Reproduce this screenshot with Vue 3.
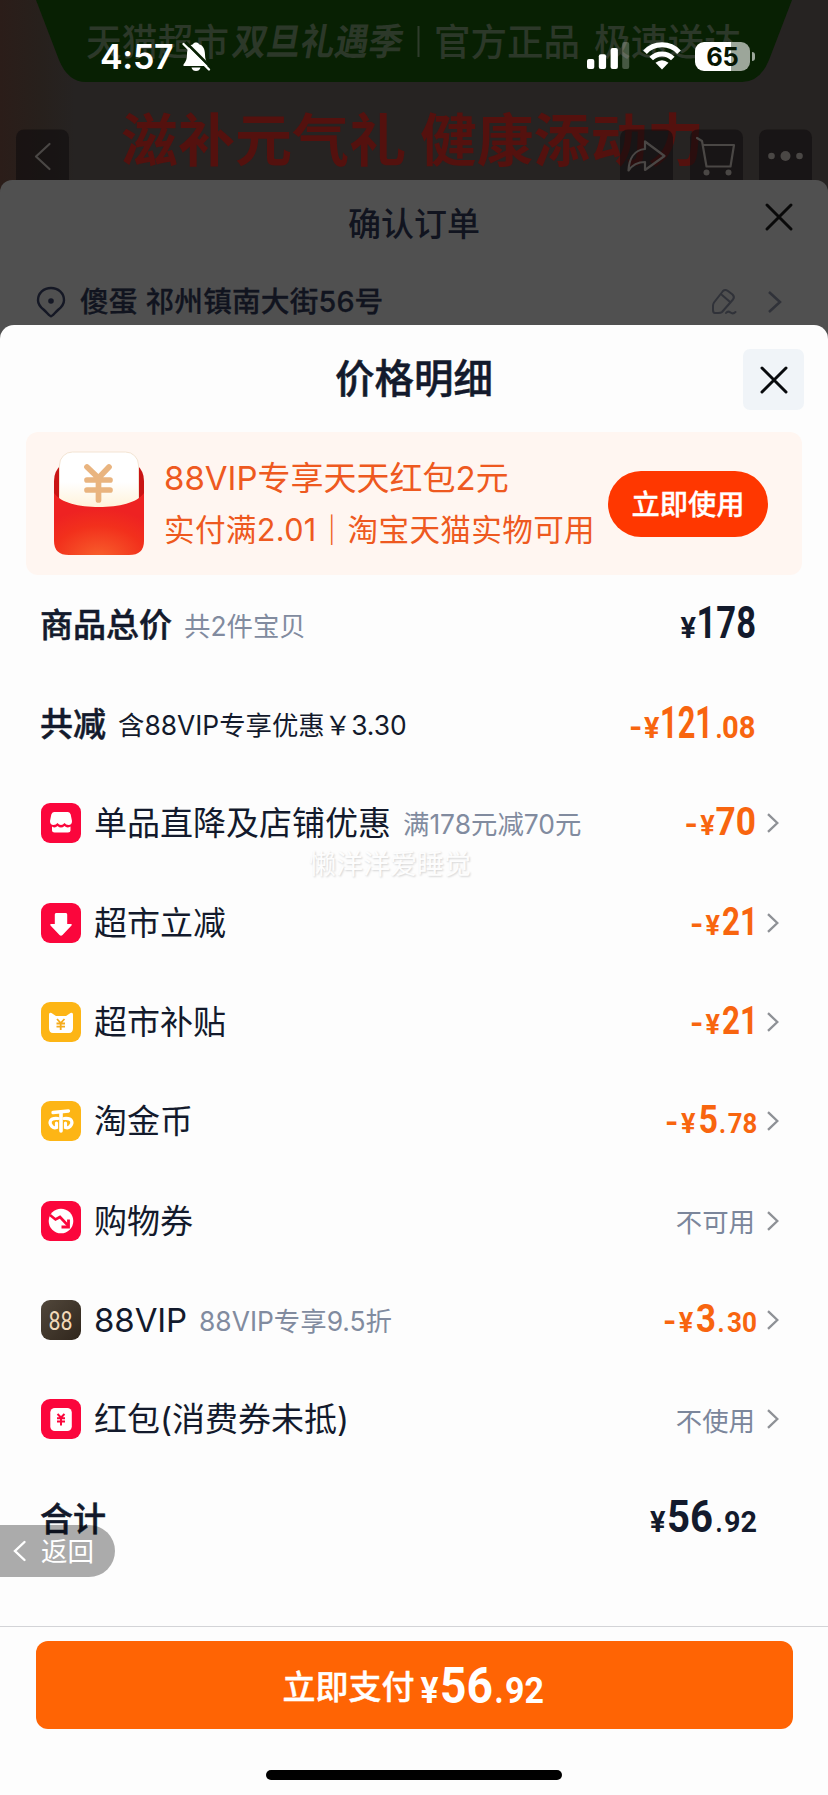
<script setup>
// Glyph runs of an amount: t text, x left edge, w advance width, s font size
const rows = [
  { label: '商品总价', sub: '共2件宝贝', bold: true, dark: true, dy: 43,
    runs: [{ t: '¥', x: 80.5, w: 15.5, s: 30 }, { t: '178', x: 96.5, w: 59.5, s: 43.5 }] },
  { label: '共减', sub: '含88VIP专享优惠￥3.30', subDark: true, bold: true, dy: 43.7,
    runs: [{ t: '-', x: 29, w: 13.5, s: 32 }, { t: '¥', x: 44, w: 15.5, s: 30 }, { t: '121', x: 60, w: 53, s: 43.5 }, { t: '.', x: 115.5, w: 7, s: 30 }, { t: '08', x: 122, w: 33.5, s: 31 }] },
  { icon: 'shop', label: '单品直降及店铺优惠', sub: '满178元减70元', arrow: true,
    runs: [{ t: '-', x: 84.5, w: 13.5, s: 31 }, { t: '¥', x: 100.3, w: 14.5, s: 27.5 }, { t: '70', x: 115.5, w: 40.5, s: 39.5 }] },
  { icon: 'down', label: '超市立减', arrow: true,
    runs: [{ t: '-', x: 90, w: 13.5, s: 31 }, { t: '¥', x: 105.6, w: 14.5, s: 27.5 }, { t: '21', x: 122, w: 36, s: 39.5 }] },
  { icon: 'cat', label: '超市补贴', arrow: true,
    runs: [{ t: '-', x: 90, w: 13.5, s: 31 }, { t: '¥', x: 105.6, w: 14.5, s: 27.5 }, { t: '21', x: 122, w: 36, s: 39.5 }] },
  { icon: 'coin', label: '淘金币', arrow: true,
    runs: [{ t: '-', x: 65, w: 13.5, s: 31 }, { t: '¥', x: 81, w: 14.5, s: 27.5 }, { t: '5', x: 98.5, w: 19.5, s: 39.5 }, { t: '.', x: 119, w: 7, s: 28 }, { t: '78', x: 127.8, w: 29.5, s: 28 }] },
  { icon: 'coupon', label: '购物券', text: '不可用', arrow: true },
  { icon: 'vip', label: '88VIP', sub: '88VIP专享9.5折', arrow: true,
    runs: [{ t: '-', x: 63, w: 13.5, s: 31 }, { t: '¥', x: 78.8, w: 14.5, s: 27.5 }, { t: '3', x: 96, w: 20, s: 39.5 }, { t: '.', x: 117.5, w: 7, s: 28 }, { t: '30', x: 127, w: 30, s: 28 }] },
  { icon: 'packet', label: '红包(消费券未抵)', text: '不使用', arrow: true },
  { label: '合计', bold: true, dark: true, dy: 43.3,
    runs: [{ t: '¥', x: 50, w: 15.5, s: 30 }, { t: '56', x: 67, w: 46, s: 43.5 }, { t: '.', x: 115.5, w: 7, s: 30 }, { t: '92', x: 124, w: 33, s: 30 }] },
]
const payRuns = [
  { t: '¥', x: 5.5, w: 18, s: 36 }, { t: '56', x: 25, w: 53, s: 49.5 },
  { t: '.', x: 79.5, w: 9, s: 37 }, { t: '92', x: 90, w: 39, s: 36.5 },
]
</script>

<template>
  <main class="screen">
    <header class="hero">
      <svg class="hero-art" width="828" height="180" viewBox="0 0 828 180">
        <path d="M36 0L59 60Q68 82 86 82H742Q760 82 769 60L792 0Z" fill="#082003" />
        <g class="hero-text" fill="#2c3829" font-size="37">
          <text x="86" y="56" font-weight="500" textLength="143" lengthAdjust="spacingAndGlyphs">天猫超市</text>
          <text x="0" y="0" font-weight="700" textLength="170" lengthAdjust="spacingAndGlyphs" transform="translate(231 55) skewX(-10)">双旦礼遇季</text>
          <path d="M418.500 26V57" stroke="#2f3c2c" stroke-width="2" />
          <text x="434" y="56" textLength="146" font-weight="500" lengthAdjust="spacingAndGlyphs">官方正品</text>
          <text x="594" y="56" textLength="147" font-weight="500" lengthAdjust="spacingAndGlyphs">极速送达</text>
        </g>
        <g class="hero-text" fill="#54110e" font-size="57" font-weight="700">
          <text x="121" y="161" textLength="285" lengthAdjust="spacingAndGlyphs">滋补元气礼</text>
          <text x="420" y="161" textLength="284" lengthAdjust="spacingAndGlyphs">健康添动力</text>
        </g>
        <g fill="#100d0e" fill-opacity=".62">
          <rect x="16" y="129.500" width="53" height="58" rx="8" />
          <rect x="620" y="129.500" width="53" height="58" rx="8" />
          <rect x="690" y="129.500" width="53" height="58" rx="8" />
          <rect x="759" y="129.500" width="53" height="58" rx="8" />
        </g>
        <g fill="none" stroke="#4a4745" stroke-width="2.200" stroke-linecap="round" stroke-linejoin="round">
          <path d="M49.500 144L36 156.500L49.500 169" />
          <path d="M645 141.500V149C634 150 629 159 628.500 170.500C633 164 639 162 645 162V170L664.500 156Z" />
          <path d="M697 138L702 141L706.500 166.500H730.500L734 145H703" />
        </g>
        <g fill="#4a4745">
          <circle cx="706.500" cy="172.500" r="3" /><circle cx="728.500" cy="172.500" r="3" />
          <circle cx="771.500" cy="156" r="3.300" /><circle cx="785.500" cy="156" r="5" /><circle cx="799.500" cy="156" r="3.300" />
        </g>
      </svg>
      <div class="status">
        <span class="clock">4:57</span>
        <svg class="bell" width="30" height="32" viewBox="0 0 30 32">
          <path d="M2.500 23.500C5 20.500 6 18 6 13.500C6 7.500 8.500 4 12 3.200C12.500 .8 17.500 .8 18 3.200C21.500 4 24 7.500 24 13.500C24 18 25 20.500 27.500 23.500V25H2.500Z" fill="#fff" />
          <path d="M10.500 26.500H19.500Q18.500 30 15 30Q11.500 30 10.500 26.500Z" fill="#fff" />
          <path d="M4.500 1L30 26.500" stroke="#082003" stroke-width="2.600" />
          <path d="M2.500 3L28 28.500" stroke="#fff" stroke-width="2.400" stroke-linecap="round" />
        </svg>
        <span class="spacer" />
        <svg width="44" height="28" viewBox="0 0 44 28" fill="#fff">
          <rect x="1" y="17" width="7.300" height="10" rx="2" /><rect x="12.800" y="12.300" width="7.300" height="14.700" rx="2" />
          <rect x="24.600" y="6" width="7.300" height="21" rx="2" /><rect x="36.200" y="0" width="7" height="27" rx="2" fill-opacity=".25" />
        </svg>
        <svg class="wifi" width="38" height="28" viewBox="0 0 38 28">
          <g fill="none" stroke="#fff" stroke-width="5"><path d="M2 10.200C11 .3 27 .3 36 10.200" /><path d="M8.200 16.600C14.300 10.300 23.700 10.300 29.800 16.600" /></g>
          <path d="M12.500 20.800Q19 15.500 25.500 20.800L19 27.500Z" fill="#fff" />
        </svg>
        <div class="battery"><span>65</span></div>
        <i class="knob" />
      </div>
    </header>

    <section class="order">
      <div class="order-head">
        <h2>确认订单</h2>
        <svg class="order-close" width="28" height="28" viewBox="0 0 28 28" stroke="#090909" stroke-width="3" stroke-linecap="round"><path d="M2 2L26 26M26 2L2 26" /></svg>
      </div>
      <div class="address">
        <svg width="30" height="32" viewBox="0 0 30 32" fill="none" stroke="#151825" stroke-width="2.400">
          <path d="M15 30.300C13.500 30.300 11.500 27 7.500 23.500C3.800 20.500 2 18 2 14.200C2 7 7.800 2 15 2S28 7 28 14.200C28 18 26.200 20.500 22.500 23.500C18.500 27 16.500 30.300 15 30.300Z" /><circle cx="15" cy="15" r="2.800" fill="#151825" stroke="none" />
        </svg>
        <span class="address-text">傻蛋 祁州镇南大街56号</span>
        <svg class="edit" width="26" height="28" viewBox="0 0 26 28" fill="none" stroke="#303239" stroke-width="2" stroke-linecap="round" stroke-linejoin="round">
          <path d="M3 14.500L12 3Q14 1 17 3L21.500 6.500Q24 9 22 11.500L11 24Q10 25 7 25H4Q2 25 2 22V18Q2 16 3 14.500ZM11 7L18.500 13.500M15 25Q17 22.500 19.500 24.500T24.500 24" />
        </svg>
        <svg class="go" width="14" height="22" viewBox="0 0 14 22" fill="none" stroke="#303239" stroke-width="2.500"><path d="M1 1L12 11L1 21" /></svg>
      </div>
    </section>

    <div class="backdrop">
      <section class="sheet">
        <div class="sheet-head">
          <h1>价格明细</h1>
          <button class="close" aria-label="关闭">
            <svg width="28" height="28" viewBox="0 0 28 28" stroke="#080a0d" stroke-width="3" stroke-linecap="round"><path d="M2 2L26 26M26 2L2 26" /></svg>
          </button>
        </div>

        <div class="promo">
          <svg class="envelope" width="92" height="106" viewBox="0 0 92 106">
            <defs>
              <linearGradient id="paper" x2="0" y2="1"><stop offset=".4" stop-color="#fff" /><stop offset="1" stop-color="#ffe9bd" /></linearGradient>
              <radialGradient id="pocket" cx=".5" cy="1.050" r=".8"><stop stop-color="#f8602c" /><stop offset=".65" stop-color="#f2301c" /><stop offset="1" stop-color="#ee2222" /></radialGradient>
            </defs>
            <path d="M1 30Q1 20 8 14H84Q91 20 91 30V75H1Z" fill="#c91414" />
            <rect x="6.500" y="1" width="79" height="75" rx="13" fill="url(#paper)" stroke="#f3e4d3" />
            <g fill="none" stroke="#e9b47f" stroke-width="5.700" stroke-linecap="round"><path d="M34 16L45.500 27L56 16M34 29H57M34 39H57M45.500 28V49" /></g>
            <path d="M1 42C8 52 26 56 46 56S84 52 91 42V90Q91 104 76 104H16Q1 104 1 90Z" fill="url(#pocket)" />
          </svg>
          <div class="promo-text">
            <p class="promo-title">88VIP专享天天红包2元</p>
            <p class="promo-sub">实付满2.01｜淘宝天猫实物可用</p>
          </div>
          <button class="use">立即使用</button>
        </div>

        <ul class="rows">
          <li v-for="r in rows" :key="r.label" class="row">
            <svg v-if="r.icon" class="badge" width="40" height="40" viewBox="0 0 40 40">
              <defs><linearGradient id="brown" x2="1" y2="1"><stop stop-color="#51473b" /><stop offset="1" stop-color="#30261c" /></linearGradient></defs>
              <rect width="40" height="40" rx="9" :fill="r.icon === 'vip' ? 'url(#brown)' : r.icon === 'cat' || r.icon === 'coin' ? '#fdb515' : '#fb063c'" />
              <g v-if="r.icon === 'shop'" fill="#fff">
                <path d="M13 9H27Q29 9 29.700 11.500L31 18Q31 22 27.500 22Q25 22 23.500 20Q22 22 20 22Q18 22 16.500 20Q15 22 12.500 22Q9 22 9 18L10.300 11.500Q11 9 13 9Z" />
                <path d="M11 23.500Q14 25.500 16.500 23Q20 26 23.500 23Q26 25.500 29.500 23.500V27.500Q29.500 29.500 27 29.500H13.500Q11 29.500 11 27.500Z" />
              </g>
              <path v-else-if="r.icon === 'down'" d="M15 10H25Q26.200 10 26.200 11.500V21H30Q31.500 21 30.500 22.500L21.500 32Q20 33.500 18.500 32L9.500 22.500Q8.500 21 10 21H13.800V11.500Q13.800 10 15 10Z" fill="#fff" />
              <g v-else-if="r.icon === 'cat'">
                <path d="M8 12.500Q8 10 10.500 11L15 14H25L29.500 11Q32 10 32 12.500V26Q32 31 28 31H12Q8 31 8 26Z" fill="#fff" />
                <path d="M16 17L19.700 21L23.500 17M15.500 21.500H24M15.500 24.700H24M19.700 21V28" stroke="#f5ac1c" stroke-width="1.800" fill="none" />
              </g>
              <g v-else-if="r.icon === 'coin'" fill="none" stroke="#fff" stroke-linecap="round">
                <path d="M12 11.500L27.500 10" stroke-width="3.300" /><path d="M20 11V30" stroke-width="3.600" />
                <path d="M17 17.500C8.500 16.500 7.500 22 11 25.500Q13 27.500 15.500 26.500V22M23 17.500C31.500 16.500 32.500 22 29 25.500Q27 27.500 24.500 26.500V22" stroke-width="3.200" />
              </g>
              <g v-else-if="r.icon === 'coupon'" fill="none">
                <circle cx="20" cy="20" r="12.300" fill="#fff" />
                <path d="M9 14L14.500 18.500L19 16L27 24.500" stroke="#fb063c" stroke-width="2.600" /><path d="M20.500 26H27.500V18.500" stroke="#fb063c" stroke-width="2.800" />
              </g>
              <text v-else-if="r.icon === 'vip'" class="amount-font vip" x="7.500" y="29.500" textLength="24" lengthAdjust="spacingAndGlyphs">88</text>
              <g v-else-if="r.icon === 'packet'">
                <rect x="9.300" y="9" width="21.500" height="23" rx="4.500" fill="#fff" />
                <path d="M16.500 15L20 18.500L23.500 15M16 19.300H24M16 22.500H24M20 18.500V26.500" stroke="#fb063c" stroke-width="2" fill="none" />
              </g>
            </svg>
            <span class="label" :class="{ bold: r.bold, tight: r.icon === 'vip' }">{{ r.label }}</span>
            <span v-if="r.sub" class="sub" :class="{ ink: r.subDark }">{{ r.sub }}</span>
            <span class="spacer" />
            <svg v-if="r.runs" class="amount" :class="{ ink: r.dark }" width="155" height="60" viewBox="0 0 155 60">
              <text v-for="p in r.runs" :key="p.x" class="amount-font" :x="p.x" :y="r.dy || 41.8" :font-size="p.s" :textLength="p.w" lengthAdjust="spacingAndGlyphs">{{ p.t }}</text>
            </svg>
            <span v-else class="state">{{ r.text }}</span>
            <span class="arrow"><svg v-if="r.arrow" width="12" height="20" viewBox="0 0 12 20" fill="none" stroke="#8e9196" stroke-width="2.300"><path d="M1 1.200L10.300 10L1 18.800" /></svg></span>
          </li>
        </ul>

        <footer class="footer">
          <button class="pay">
            <span>立即支付</span>
            <svg width="131" height="60" viewBox="0 0 131 60" fill="#fff">
              <text v-for="p in payRuns" :key="p.x" class="amount-font" :x="p.x" y="47.500" :font-size="p.s" :textLength="p.w" lengthAdjust="spacingAndGlyphs">{{ p.t }}</text>
            </svg>
          </button>
          <i class="home" />
        </footer>
      </section>
    </div>

    <span class="watermark">懒洋洋爱睡觉</span>
    <div class="back">
      <svg width="13" height="22" viewBox="0 0 13 22" fill="none" stroke="#fff" stroke-width="2.400" stroke-linecap="round"><path d="M11.500 2L2 11L11.500 20" /></svg>
      <span>返回</span>
    </div>
  </main>
</template>

<style>
body { margin: 0; }
</style>

<style scoped>
* { box-sizing: border-box; }
h1, h2, p, ul { margin: 0; padding: 0; font-weight: 500; }
svg { display: block; flex: none; overflow: visible; }
button { border: 0; padding: 0; font: inherit; }
.screen {
  position: relative; width: 828px; height: 1795px; overflow: hidden;
  display: flex; flex-direction: column; color: #131a2c;
  font-family: Inter, "Noto Sans CJK SC", sans-serif; white-space: nowrap;
  background: linear-gradient(90deg, #2b1d19 0, #27201c 40px, #262322 75px, #262322 100%);
}
.spacer { flex: 1; }
.hero { height: 180px; position: relative; flex: none; }
.hero-art { position: absolute; inset: 0; overflow: hidden; }
.hero-text { font-family: "Noto Sans CJK SC", sans-serif; }
.status { position: relative; display: flex; align-items: center; height: 112px; padding: 0 73px 0 100px; color: #fff; }
.clock { font-size: 34px; font-weight: 600; width: 81px; letter-spacing: -.3px; }
.bell { margin-top: 2px; }
.wifi { margin: 0 14px 0 13px; }
.battery {
  width: 55px; height: 29px; border-radius: 9px; display: flex; align-items: center; justify-content: center;
  background: linear-gradient(90deg, #fff 36px, #9ca69a 36px); color: #071602; font-size: 25.500px; font-weight: 700; letter-spacing: -.3px;
}
.knob { width: 3px; height: 9px; margin-left: 2px; border-radius: 0 4px 4px 0; background: #9ca69a; }
.order { height: 145px; flex: none; background: #505050; border-radius: 12px 12px 0 0; color: #11141f; }
.order-head { height: 88px; display: flex; justify-content: center; align-items: center; position: relative; }
.order-head h2 { font-size: 33px; line-height: 48px; }
.order-close { position: absolute; left: 765px; top: 23px; }
.address { height: 32px; margin-top: 18px; padding: 0 46px 0 36px; display: flex; align-items: center; }
.address-text { font-size: 28.700px; font-weight: 500; margin-left: 14px; line-height: 32px; flex: 1; letter-spacing: .15px; -webkit-text-stroke: .3px; }
.edit { margin-right: 31px; }
.backdrop { flex: 1; background: #505050; display: flex; }
.sheet { width: 828px; background: #fdfdfd; border-radius: 14px 14px 0 0; display: flex; flex-direction: column; }
.sheet-head { height: 107px; position: relative; display: flex; justify-content: center; align-items: center; }
.sheet-head h1 { font-size: 39.500px; line-height: 56px; -webkit-text-stroke: .5px; }
.close { position: absolute; left: 743px; top: 24px; width: 61px; height: 61px; border-radius: 7px; background: #f0f4f8; display: grid; place-items: center; }
.promo { height: 143px; margin: 0 26px; padding: 0 34px 0 27px; border-radius: 12px; background: #fff6f1; display: flex; align-items: center; }
.promo-text { margin-left: 19px; flex: 1; color: #ee5920; }
.promo-title { font-size: 33px; line-height: 52px; font-weight: 400; }
.promo-sub { font-size: 30.600px; line-height: 52px; font-weight: 400; letter-spacing: .34px; }
.use { flex: none; width: 160px; height: 66px; padding-bottom: 3px; border-radius: 33px; background: #ff3700; color: #fff; font-size: 28.300px; font-weight: 500; -webkit-text-stroke: .3px; }
.rows { list-style: none; }
.row { height: 99.350px; padding: 0 49px 0 40px; display: flex; align-items: center; }
.badge { margin: 0 13px 0 1px; }
.label { font-size: 33px; line-height: 48px; font-weight: 400; }
.label.bold { font-weight: 500; -webkit-text-stroke: .5px; }
.label.tight { letter-spacing: -.1px; }
.sub { margin: 2px 0 0 12px; font-size: 26.400px; line-height: 40px; font-weight: 400; color: #818b9f; }
.sub.ink { color: #131a2c; }
.amount { fill: #f8650f; }
.amount.ink { fill: #131a2c; }
.amount-font { font-family: Roboto, sans-serif; font-weight: 700; }
.vip { font-size: 26px; font-weight: 400; fill: #f2d9b8; }
.state { font-size: 26.400px; font-weight: 400; color: #7b869b; margin-right: 1px; }
.arrow { width: 24px; padding-left: 12px; flex: none; }
.state + .arrow { width: 23px; padding-left: 11px; }
.footer { margin-top: auto; height: 169.500px; border-top: 1px solid #d3d4d7; padding: 14px 35px 0; display: flex; flex-direction: column; align-items: center; }
.pay { width: 757px; height: 88px; border-radius: 12px; background: #ff6404; color: #fff; display: flex; justify-content: center; align-items: center; font-size: 33px; font-weight: 500; -webkit-text-stroke: .4px; }
.pay svg { -webkit-text-stroke: 0; }
.home { width: 296px; height: 10px; border-radius: 5px; margin-top: 41px; background: #000; }
.watermark { position: absolute; left: 309px; top: 845px; font-size: 27px; line-height: 40px; color: #fdfdfd; text-shadow: 1px 1px 2px #d4d4d4; }
.back { position: absolute; left: 0; top: 1525px; width: 115px; height: 52px; padding-left: 13px; border-radius: 0 26px 26px 0; background: rgba(0, 0, 0, .32); color: #fff; font-size: 26.500px; display: flex; align-items: center; gap: 15px; }
.back span { margin-top: -3px; }
</style>
